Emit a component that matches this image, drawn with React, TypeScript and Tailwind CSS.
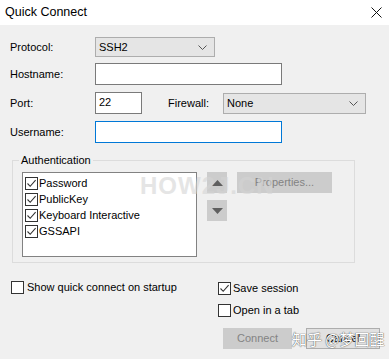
import React, { useState } from 'react';

const font = { fontFamily: '"Liberation Sans", Arial, sans-serif' };

const CheckBox: React.FC<{ checked: boolean; onChange?: () => void }> = ({ checked, onChange }) => (
    <span onClick={onChange} className="w-[13px] h-[13px] border border-[#333333] bg-white flex items-center justify-center shrink-0">
        {checked && (
            <svg width="11" height="11" viewBox="0 0 11 11">
                <path d="M1.5 5.5 L4.2 8.3 L9.6 2.2" fill="none" stroke="#333333" strokeWidth="1.1" />
            </svg>
        )}
    </span>
);

const Chevron: React.FC = () => (
    <svg width="9" height="5" viewBox="0 0 9 5">
        <path d="M0.5 0.5 L4.5 4.5 L8.5 0.5" fill="none" stroke="#555555" strokeWidth="1" />
    </svg>
);

const Combo: React.FC<{ value: string; className: string }> = ({ value, className }) => (
    <div className={`bg-[#e5e5e5] border border-[#adadad] flex items-center justify-between pl-[3px] pr-[7px] ${className}`}>
        <span className="text-black">{value}</span>
        <Chevron />
    </div>
);

const App: React.FC = () => {
    const [auth, setAuth] = useState({ Password: true, PublicKey: true, 'Keyboard Interactive': true, GSSAPI: true });
    const [showOnStartup, setShowOnStartup] = useState(false);
    const [saveSession, setSaveSession] = useState(true);
    const [openInTab, setOpenInTab] = useState(false);

    return (
        <div style={font} className="relative w-[389px] h-[359px] bg-[#f0f0f0] flex flex-col overflow-hidden text-[11px] text-black">
            {/* title bar */}
            <div className="h-[25px] bg-white flex items-center justify-between pl-[5px] pr-[7px] shrink-0">
                <span className="text-[12.5px]">Quick Connect</span>
                <svg width="11" height="11" viewBox="0 0 11 11">
                    <path d="M0.5 0.5 L10.5 10.5 M10.5 0.5 L0.5 10.5" stroke="#111111" strokeWidth="1" />
                </svg>
            </div>

            <div className="pl-[10px] flex flex-col">
                <div className="mt-[12px] h-[20px] flex items-center">
                    <span className="w-[85px]">Protocol:</span>
                    <Combo value="SSH2" className="w-[120px] h-[20px]" />
                </div>
                <div className="mt-[6px] h-[22px] flex items-center">
                    <span className="w-[85px]">Hostname:</span>
                    <div className="w-[187px] h-[22px] bg-white border border-[#7a7a7a]" />
                </div>
                <div className="mt-[7px] h-[22px] flex items-center">
                    <span className="w-[85px]">Port:</span>
                    <div className="w-[47px] h-[22px] bg-white border border-[#7a7a7a] pl-[3px] leading-[18px]">22</div>
                    <span className="ml-[26px] w-[55px]">Firewall:</span>
                    <Combo value="None" className="w-[143px] h-[21px]" />
                </div>
                <div className="mt-[7px] h-[22px] flex items-center">
                    <span className="w-[85px]">Username:</span>
                    <div className="w-[187px] h-[22px] bg-white border border-[#0078d7]" />
                </div>

                {/* authentication group */}
                <div className="relative mt-[17px] ml-[2px] w-[343px] h-[103px] border border-[#dcdcdc] pl-[9px] pt-[11px] flex">
                    <span className="absolute left-[6px] top-[-9px] px-[2px] bg-[#f0f0f0] leading-[16px]">Authentication</span>
                    <div className="w-[175px] h-[85px] bg-white border border-[#828282] pl-[2px] pt-[4px] flex flex-col">
                        {(Object.keys(auth) as (keyof typeof auth)[]).map(k => (
                            <label key={k} className="h-[16px] flex items-start gap-[1px]">
                                <CheckBox checked={auth[k]} onChange={() => setAuth({ ...auth, [k]: !auth[k] })} />
                                <span className="leading-[13px]">{k}</span>
                            </label>
                        ))}
                    </div>
                    <div className="ml-[10px] flex flex-col gap-[7px]">
                        <button className="w-[20px] h-[21px] bg-[#cccccc] flex items-center justify-center">
                            <svg width="11" height="6" viewBox="0 0 11 6"><path d="M0 6 L5.5 0 L11 6 Z" fill="#5f5f5f" /></svg>
                        </button>
                        <button className="w-[20px] h-[21px] bg-[#cccccc] flex items-center justify-center">
                            <svg width="11" height="6" viewBox="0 0 11 6"><path d="M0 0 L5.5 6 L11 0 Z" fill="#5f5f5f" /></svg>
                        </button>
                    </div>
                    <button className="ml-[10px] w-[95px] h-[21px] bg-[#cccccc] text-[#838383] text-[11px]">Properties...</button>
                </div>

                {/* options */}
                <div className="mt-[18px] flex">
                    <label className="ml-[1px] w-[207px] h-[13px] flex items-center gap-[3px]">
                        <CheckBox checked={showOnStartup} onChange={() => setShowOnStartup(!showOnStartup)} />
                        <span>Show quick connect on startup</span>
                    </label>
                    <div className="mt-[1px] flex flex-col gap-[9px]">
                        <label className="h-[13px] flex items-center gap-[2px]">
                            <CheckBox checked={saveSession} onChange={() => setSaveSession(!saveSession)} />
                            <span>Save session</span>
                        </label>
                        <label className="h-[13px] flex items-center gap-[2px]">
                            <CheckBox checked={openInTab} onChange={() => setOpenInTab(!openInTab)} />
                            <span>Open in a tab</span>
                        </label>
                    </div>
                </div>

                <div className="mt-[11px] ml-[213px] flex gap-[14px]">
                    <button disabled className="w-[69px] h-[21px] bg-[#cccccc] text-[#838383] text-[11px]">Connect</button>
                    <button className="w-[74px] h-[21px] bg-[#e1e1e1] border border-[#adadad] text-[11px]">Cancel</button>
                </div>
            </div>

            {/* watermarks */}
            <span className="absolute left-[140px] top-[168px] text-[24px] font-bold text-[#d4d4d4] opacity-60 pointer-events-none tracking-[1px]">HOW2J.CN</span>
            <span
                className="absolute left-[292px] top-[328px] text-[15px] text-white pointer-events-none"
                style={{ fontFamily: '"Noto Sans CJK SC", sans-serif', textShadow: '0 0 1px #555, 0 0 1px #555' }}
            >
                知乎 @梦回醒
            </span>
        </div>
    );
};

export default App;
